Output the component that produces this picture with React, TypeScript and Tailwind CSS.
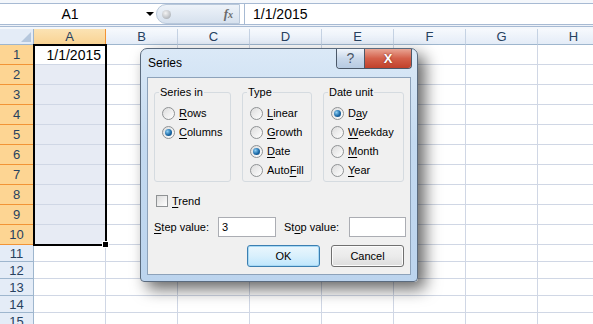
import React from 'react';

const cols = ['A', 'B', 'C', 'D', 'E', 'F', 'G', 'H'];
const rows = Array.from({ length: 15 }, (_, i) => i + 1);

function U({ children }: { children: React.ReactNode }) {
  return <span className="underline underline-offset-[2px] decoration-1">{children}</span>;
}

function Radio({ checked, label }: { checked?: boolean; label: React.ReactNode }) {
  return (
    <div className="flex h-[19px] items-center gap-[4px]">
      <div className="flex h-[13px] w-[13px] shrink-0 items-center justify-center rounded-full border border-[#8f9294] bg-[linear-gradient(135deg,#dcdcdc,#ffffff)]">
        {checked && (
          <div className="h-[7px] w-[7px] rounded-full bg-[radial-gradient(circle_at_35%_35%,#8fd0f5,#1b6aa8_55%,#0b3a6a)]" />
        )}
      </div>
      <span>{label}</span>
    </div>
  );
}

function Group({ title, width, children }: { title: string; width: number; children: React.ReactNode }) {
  return (
    <div className="relative h-[90px] rounded-[3px] border border-[#d5dbe0] pl-[7px] pt-[11px]" style={{ width }}>
      <div className="absolute -top-[8px] left-[4px] bg-[#f0f0f0] px-[1px] leading-[14px]">{title}</div>
      {children}
    </div>
  );
}

export default function App() {
  return (
    <div className="relative h-[324px] w-[593px] overflow-hidden bg-white font-['Liberation_Sans',Arial,sans-serif] text-black">
      {/* Formula bar */}
      <div className="h-[3px] bg-[#f4f7fb]" />
      <div className="flex h-[22px] border-y border-[#a7bad3] bg-white">
        <div className="relative flex w-[156px] items-center">
          <span className="w-[140px] text-center text-[14px] leading-none">A1</span>
          <div className="absolute left-[146px] top-[8px] h-0 w-0 border-x-[4px] border-t-[4px] border-x-transparent border-t-black" />
        </div>
        <div className="flex w-[88px] items-center">
          <div className="relative flex h-[20px] w-[84px] items-center justify-end rounded-l-full border border-[#b9c8da] bg-[linear-gradient(#eef3f9,#d6e1ee)] pr-[6px]">
            <div className="absolute left-[5px] top-[5px] h-[9px] w-[9px] rounded-full bg-[radial-gradient(circle_at_40%_35%,#f4f4f4,#9aa0a8)]" />
            <span className="font-['Liberation_Serif',serif] text-[13px] font-bold italic text-[#6b6b6b]">f<span className="text-[10px]">x</span></span>
          </div>
        </div>
        <div className="flex flex-1 items-center border-l border-[#a7bad3] pl-[8px] text-[14px]">1/1/2015</div>
      </div>
      <div className="h-[1px] bg-[#eef2f8]" />
      <div className="h-[1px] bg-[#a7bad3]" />
      <div className="h-[2px] bg-[#f4f7fb]" />

      {/* Column header row */}
      <div className="flex h-[16px] text-[13px] text-[#27415f]">
        <div className="relative w-[34px] shrink-0 border-b border-r border-[#9eb6ce] bg-[#e4ecf7]">
          <svg className="absolute bottom-[2px] right-[2px]" width="10" height="10" viewBox="0 0 10 10">
            <polygon points="10,0 10,10 0,10" fill="#b5c7dd" />
          </svg>
        </div>
        {cols.map((c) => (
          <div
            key={c}
            className={
              c === 'A'
                ? 'flex w-[72px] shrink-0 items-center justify-center border-b border-r border-[#f29436] bg-[linear-gradient(#fbe3b4,#f9d393)] leading-none'
                : 'flex w-[72px] shrink-0 items-center justify-center border-b border-r border-[#c5d2e3] border-b-[#9eb6ce] bg-[linear-gradient(#f6f9fd,#e4ecf7)] leading-none'
            }
          >
            {c}
          </div>
        ))}
      </div>

      {/* Rows */}
      {rows.map((r) => {
        const sel = r <= 10;
        const h = sel ? 'h-[20px]' : 'h-[17px]';
        return (
          <div key={r} className={`flex ${h} text-[13px]`}>
            <div
              className={
                sel
                  ? 'flex w-[34px] shrink-0 items-center justify-center border-b border-r border-[#f29436] bg-[#fdd593] leading-none text-[#27415f]'
                  : 'flex w-[34px] shrink-0 items-center justify-center border-b border-r border-[#9eb6ce] bg-[#e4ecf7] leading-none text-[#27415f]'
              }
            >
              {r}
            </div>
            {cols.map((c) => (
              <div
                key={c}
                className={
                  c === 'A' && sel && r > 1
                    ? 'w-[72px] shrink-0 border-b border-r border-[#d0d7e5] bg-[#e7ebf4]'
                    : 'flex w-[72px] shrink-0 items-center justify-end border-b border-r border-[#d0d7e5] pr-[4px] text-[14px] leading-none'
                }
              >
                {c === 'A' && r === 1 ? '1/1/2015' : null}
              </div>
            ))}
          </div>
        );
      })}

      {/* Selection border */}
      <div className="absolute left-[33px] top-[44px] h-[202px] w-[74px] border-2 border-black" />
      <div className="absolute left-[102px] top-[241px] h-[7px] w-[7px] border border-white bg-black" />

      {/* Dialog */}
      <div className="absolute left-[140px] top-[48px] flex h-[234px] w-[278px] flex-col rounded-t-[7px] rounded-b-[4px] border border-[#5b6b7e] bg-[linear-gradient(#dbe9f7,#c4daf0_40%,#bcd4ee)] px-[6px] pb-[6px] shadow-[7px_7px_16px_rgba(0,0,0,0.6)]">
        <div className="flex h-[28px] items-center pl-[1px] text-[12px] leading-none">Series</div>
        {/* caption buttons */}
        <div className="absolute right-[5px] top-0 flex h-[20px] overflow-hidden rounded-b-[4px] border border-t-0 border-[#4b5868]">
          <div className="flex w-[28px] items-center justify-center border-r border-[#4b5868] bg-[linear-gradient(#f0f5fb,#c9d8ea_50%,#b7cbe2)] text-[14px] text-[#4a5566]">?</div>
          <div className="flex w-[46px] items-center justify-center bg-[linear-gradient(#e9a594,#d4604a_50%,#c0412b)] text-[13px] font-bold text-white [text-shadow:0_0_2px_#7a2010]">X</div>
        </div>
        <div className="flex flex-1 flex-col border border-[#8da2ba] bg-[#f0f0f0] pl-[6px] pt-[14px] text-[11px] leading-none">
          <div className="flex gap-[11px]">
            <Group title="Series in" width={77}>
              <Radio label={<><U>R</U>ows</>} />
              <Radio checked label={<><U>C</U>olumns</>} />
            </Group>
            <Group title="Type" width={70}>
              <Radio label={<><U>L</U>inear</>} />
              <Radio label={<><U>G</U>rowth</>} />
              <Radio checked label={<><U>D</U>ate</>} />
              <Radio label={<>Auto<U>F</U>ill</>} />
            </Group>
            <Group title="Date unit" width={81}>
              <Radio checked label={<>D<U>a</U>y</>} />
              <Radio label={<><U>W</U>eekday</>} />
              <Radio label={<><U>M</U>onth</>} />
              <Radio label={<><U>Y</U>ear</>} />
            </Group>
          </div>
          <div className="mt-[13px] flex items-center gap-[4px] pl-[2px]">
            <div className="h-[12px] w-[12px] border border-[#8f9294] bg-[linear-gradient(135deg,#dcdcdc,#ffffff)]" />
            <span><U>T</U>rend</span>
          </div>
          <div className="mt-[10px] flex h-[20px] items-center">
            <span className="w-[64px]"><U>S</U>tep value:</span>
            <div className="flex h-[20px] w-[58px] items-center border border-[#abadb3] bg-white pl-[3px]">3</div>
            <span className="ml-[8px] w-[65px]">St<U>o</U>p value:</span>
            <div className="h-[20px] w-[57px] border border-[#abadb3] bg-white" />
          </div>
          <div className="mt-[8px] flex gap-[11px] pl-[93px]">
            <div className="flex h-[22px] w-[73px] items-center justify-center rounded-[3px] border border-[#3c7fb1] bg-[linear-gradient(#eaf6fd,#d9f0fc_50%,#bee6fd)] shadow-[inset_0_0_0_1px_#a7d9f5]">OK</div>
            <div className="flex h-[22px] w-[73px] items-center justify-center rounded-[3px] border border-[#707070] bg-[linear-gradient(#f2f2f2,#ebebeb_50%,#dddddd)] shadow-[inset_0_0_0_1px_#fcfcfc]">Cancel</div>
          </div>
        </div>
      </div>
    </div>
  );
}
